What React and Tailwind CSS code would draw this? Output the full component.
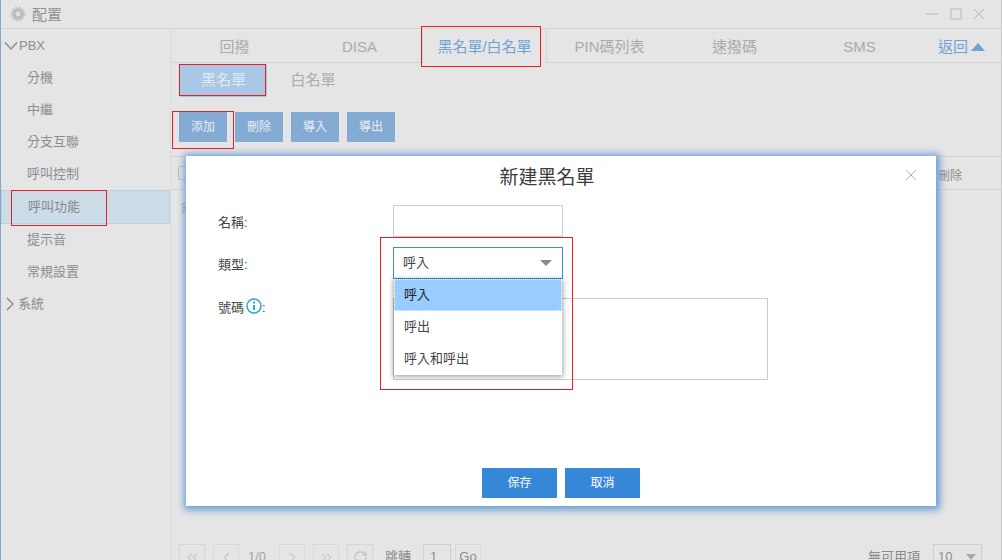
import React from "react";
import { ChevronsLeft, ChevronLeft, ChevronRight, ChevronsRight, RefreshCw } from "lucide-react";

const font = { fontFamily: '"Liberation Sans", "Noto Sans CJK TC", sans-serif' };

function Tab({ children, active }) {
  return (
    <div
      className={
        active
          ? "w-[125px] pt-[3px] flex items-center justify-center text-[#6ea3d6] border-x border-[#d4d4d4]"
          : "w-[125px] pt-[3px] flex items-center justify-center text-[#ababab] border-b border-[#d4d4d4]"
      }
    >
      {children}
    </div>
  );
}

function ToolBtn({ children }) {
  return (
    <button className="w-[48px] h-[30px] bg-[#84abd3] text-[#e6eef6] text-[12px]">{children}</button>
  );
}

function PageBox({ children, className }) {
  return (
    <div className={"w-[26px] h-[26px] border border-[#d8d8d8] flex items-center justify-center text-[#c8c8c8] " + (className || "")}>
      {children}
    </div>
  );
}

function SideItem({ children }) {
  return <div className="h-[32px] pl-[26px] flex items-center text-[13px] text-[#8a8e94]">{children}</div>;
}

function RedBox({ className }) {
  return <div className={"absolute border border-[#ee1c25] pointer-events-none " + className} />;
}

export default function App() {
  return (
    <div
      style={font}
      className="relative w-[1002px] h-[560px] overflow-hidden bg-[#e5e5e5] border-l border-l-[#8aa6c6] border-r border-r-[#c8c8c8]"
    >
      {/* title bar */}
      <div className="h-[29px] border-b border-[#d4d4d4] flex items-center pl-[9px] pr-[16px]">
        <svg width="16" height="16" viewBox="0 0 16 16">
          <circle cx="8" cy="8" r="6" fill="#bdbdbd" />
          <circle cx="8" cy="8" r="6.6" fill="none" stroke="#c8c8c8" strokeWidth="1.8" strokeDasharray="2.2 1.3" />
          <circle cx="8" cy="8" r="2.4" fill="#e0e0e0" />
        </svg>
        <span className="ml-[6px] pt-[2px] text-[15px] text-[#8d9298]">配置</span>
        <div className="ml-auto flex items-center gap-[11px]">
          <div className="w-[14px] h-[2px] bg-[#cfcfcf]" />
          <div className="w-[12px] h-[12px] border-2 border-[#cfcfcf]" />
          <svg width="12" height="12" viewBox="0 0 12 12" stroke="#c8c8c8" strokeWidth="1.2">
            <path d="M1 1l10 10M11 1L1 11" />
          </svg>
        </div>
      </div>

      <div className="flex">
        {/* sidebar */}
        <div className="w-[170px] h-[531px] shrink-0 border-r border-[#dcdcdc]">
          <div className="h-[32px] pt-[1px] pl-[3px] flex items-center text-[13px] text-[#8a8e94]">
            <svg width="14" height="10" viewBox="0 0 14 10" fill="none" stroke="#8a8e94" strokeWidth="1.5">
              <path d="M1 1.5l6 6.5 6-6.5" />
            </svg>
            <span className="ml-[1px]">PBX</span>
          </div>
          <div className="h-[1px]" />
          <SideItem>分機</SideItem>
          <SideItem>中繼</SideItem>
          <SideItem>分支互聯</SideItem>
          <SideItem>呼叫控制</SideItem>
          <div className="h-[34px] pl-[26px] flex items-center text-[13px] text-[#85898e] bg-[#cedce8] border border-[#b8d0e4]">
            呼叫功能
          </div>
          <SideItem>提示音</SideItem>
          <SideItem>常規設置</SideItem>
          <div className="h-[32px] pl-[5px] flex items-center text-[13px] text-[#8a8e94]">
            <svg width="8" height="14" viewBox="0 0 8 14" fill="none" stroke="#8a8e94" strokeWidth="1.5">
              <path d="M1 1l6 6-6 6" />
            </svg>
            <span className="ml-[4px]">系統</span>
          </div>
        </div>

        {/* main */}
        <div className="flex-1 min-w-0">
          <div className="h-[34px] flex text-[15px]">
            <div className="w-[1px] border-b border-[#d4d4d4]" />
            <Tab>回撥</Tab>
            <Tab>DISA</Tab>
            <Tab active>黑名單/白名單</Tab>
            <Tab>PIN碼列表</Tab>
            <Tab>速撥碼</Tab>
            <Tab>SMS</Tab>
            <div className="flex-1 flex items-center pl-[16px] pt-[3px] gap-[3px] text-[#6ea3d6] border-b border-[#d4d4d4]">
              返回
              <svg width="14" height="8" viewBox="0 0 14 8">
                <path d="M7 0l7 8H0z" fill="#6ea3d6" />
              </svg>
            </div>
          </div>

          <div className="h-[34px] pl-[9px] flex items-center text-[15px]">
            <div className="w-[87px] h-[33px] pt-[1px] bg-[#a8c8e6] text-[#e2ebf3] flex items-center justify-center">黑名單</div>
            <div className="w-[92px] pt-[1px] text-center text-[#ababab]">白名單</div>
          </div>

          <div className="mt-[15px] pl-[8px] flex gap-[8px]">
            <ToolBtn>添加</ToolBtn>
            <ToolBtn>刪除</ToolBtn>
            <ToolBtn>導入</ToolBtn>
            <ToolBtn>導出</ToolBtn>
          </div>

          <div className="mt-[14px] h-[34px] border-y border-[#d4d4d4] flex items-center pl-[7px] pr-[39px]">
            <div className="w-[14px] h-[14px] rounded-[2px] border border-[#bcbcbc]" />
            <span className="ml-auto pt-[6px] text-[12px] text-[#8c8c8c]">刪除</span>
          </div>
          <div className="h-[354px] pl-[10px] pt-[10px] text-[12px] text-[#a0a6ad]">無可用項</div>

          <div className="flex items-start pl-[8px] pr-[19px] text-[13px] text-[#8c8c8c]">
            <PageBox><ChevronsLeft size={17} strokeWidth={1.5} /></PageBox>
            <PageBox className="ml-[8px]"><ChevronLeft size={17} strokeWidth={1.5} /></PageBox>
            <span className="w-[40px] pr-[4px] text-center leading-[26px] text-[#a4a4a4]">1/0</span>
            <PageBox><ChevronRight size={17} strokeWidth={1.5} /></PageBox>
            <PageBox className="ml-[8px]"><ChevronsRight size={17} strokeWidth={1.5} /></PageBox>
            <PageBox className="ml-[8px] text-[#b0b0b0]"><RefreshCw size={15} strokeWidth={2.5} /></PageBox>
            <span className="ml-[12px] leading-[26px]">跳轉</span>
            <div className="ml-[12px] w-[28px] h-[26px] border border-[#d0d0d0] pl-[6px] leading-[24px]">1</div>
            <div className="ml-[4px] w-[26px] h-[26px] border border-[#d8d8d8] text-center leading-[24px]">Go</div>
            <span className="ml-auto leading-[26px]">無可用項</span>
            <div className="ml-[13px] w-[49px] h-[26px] border border-[#d0d0d0] pl-[4px] pr-[5px] flex items-center justify-between">
              10
              <svg width="10" height="6" viewBox="0 0 10 6">
                <path d="M0 0h10L5 6z" fill="#a8a8a8" />
              </svg>
            </div>
          </div>
        </div>
      </div>

      {/* modal */}
      <div className="absolute left-[185px] top-[156px] w-[750px] h-[350px] bg-white shadow-[1px_1px_7px_3px_#6a9fd2] text-[#444]">
        <div className="h-[40px] pt-[4px] pr-[28px] flex items-center justify-center text-[19px] text-[#3c3c3c]">新建黑名單</div>
        <svg className="absolute right-[19px] top-[13px]" width="12" height="12" viewBox="0 0 12 12" stroke="#b4b4b4" strokeWidth="1">
          <path d="M1 1l10 10M11 1L1 11" />
        </svg>

        <div className="mt-[9px] pl-[32px] flex flex-col gap-[10px] text-[13px]">
          <div className="flex items-center h-[32px]">
            <span className="w-[175px] pt-[3px]">名稱:</span>
            <div className="w-[170px] h-[32px] border border-[#cccccc]" />
          </div>
          <div className="flex items-center h-[32px]">
            <span className="w-[175px] pt-[3px]">類型:</span>
            <div className="relative w-[170px] h-[32px] border border-[#3a8ed4] flex items-center pl-[9px] pr-[10px] justify-between">
              呼入
              <svg width="12" height="6" viewBox="0 0 12 6">
                <path d="M0 0h12L6 6z" fill="#8a8a8a" />
              </svg>
              <div className="absolute left-0 top-[31px] w-[168px] bg-white shadow-[0_1px_5px_1px_rgba(0,0,0,0.35)] z-10">
                <div className="h-[32px] pl-[9px] flex items-center bg-[#99ccff] border border-dotted border-white text-[#222]">呼入</div>
                <div className="h-[32px] pl-[10px] flex items-center">呼出</div>
                <div className="h-[32px] pl-[10px] flex items-center">呼入和呼出</div>
              </div>
            </div>
          </div>
          <div className="flex items-start mt-[9px]">
            <div className="w-[175px] flex items-center h-[20px]">
              號碼
              <svg className="ml-[2px] mb-[5px]" width="16" height="16" viewBox="0 0 16 16" fill="none">
                <circle cx="8" cy="8" r="7" stroke="#2ba6d8" strokeWidth="1.5" />
                <path d="M8 7v5" stroke="#2ba6d8" strokeWidth="2" />
                <path d="M8 3.6v1.8" stroke="#2ba6d8" strokeWidth="2" />
              </svg>
              :
            </div>
            <div className="w-[375px] h-[82px] border border-[#cccccc]" />
          </div>
        </div>

        <div className="absolute left-[296px] top-[312px] flex gap-[8px]">
          <button className="w-[75px] h-[30px] bg-[#3787d8] text-white text-[12px]">保存</button>
          <button className="w-[75px] h-[30px] bg-[#3787d8] text-white text-[12px]">取消</button>
        </div>
      </div>

      {/* red annotation boxes */}
      <RedBox className="left-[420px] top-[26px] w-[120px] h-[41px]" />
      <RedBox className="left-[178px] top-[64px] w-[87px] h-[32px]" />
      <RedBox className="left-[171px] top-[111px] w-[62px] h-[38px]" />
      <RedBox className="left-[10px] top-[190px] w-[96px] h-[36px]" />
      <RedBox className="left-[379px] top-[237px] w-[193px] h-[153px]" />
    </div>
  );
}
